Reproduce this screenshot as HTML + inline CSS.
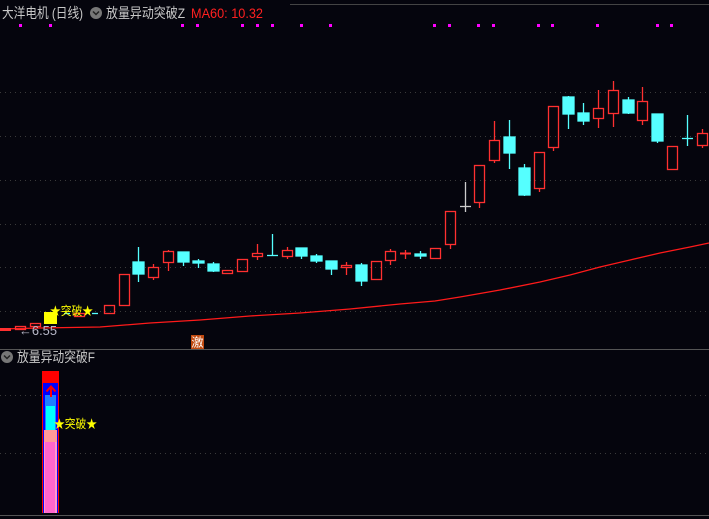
<!DOCTYPE html>
<html><head><meta charset="utf-8"><style>
html,body{margin:0;padding:0;background:#05050d;width:709px;height:519px;overflow:hidden}
svg{display:block}
text{font-family:"Liberation Sans","Noto Sans CJK SC",sans-serif}
</style></head><body>
<svg width="709" height="519" viewBox="0 0 709 519" xmlns="http://www.w3.org/2000/svg">
<rect width="709" height="519" fill="#05050d"/>
<line x1="290" y1="4.5" x2="709" y2="4.5" stroke="#444" stroke-width="1"/>
<g stroke="#3a3a3a" stroke-dasharray="1,4" stroke-width="1">
<line x1="0" y1="92.5" x2="709" y2="92.5"/><line x1="0" y1="136.5" x2="709" y2="136.5"/>
<line x1="0" y1="180.5" x2="709" y2="180.5"/><line x1="0" y1="224.5" x2="709" y2="224.5"/>
<line x1="0" y1="267.5" x2="709" y2="267.5"/><line x1="0" y1="311.5" x2="709" y2="311.5"/>
<line x1="0" y1="395.5" x2="709" y2="395.5"/><line x1="0" y1="453.5" x2="709" y2="453.5"/>
</g>
<line x1="0" y1="349.5" x2="709" y2="349.5" stroke="#555"/>
<line x1="0" y1="515.5" x2="709" y2="515.5" stroke="#555"/>
<text x="2" y="18" font-size="14" fill="#c8c8c8" textLength="81" lengthAdjust="spacingAndGlyphs">大洋电机 (日线)</text>
<circle cx="96" cy="13" r="6" fill="#777"/><path d="M93 11.5l3 3 3-3" stroke="#222" stroke-width="1.5" fill="none"/>
<text x="106" y="18" font-size="14" fill="#c8c8c8" textLength="79" lengthAdjust="spacingAndGlyphs">放量异动突破Z</text>
<text x="191" y="18" font-size="14" fill="#ff2020" textLength="72" lengthAdjust="spacingAndGlyphs">MA60: 10.32</text>
<g fill="#ff00ff">
<rect x="19" y="24" width="3" height="3"/><rect x="49" y="24" width="3" height="3"/><rect x="181" y="24" width="3" height="3"/><rect x="196" y="24" width="3" height="3"/><rect x="241" y="24" width="3" height="3"/><rect x="256" y="24" width="3" height="3"/><rect x="271" y="24" width="3" height="3"/><rect x="300" y="24" width="3" height="3"/><rect x="329" y="24" width="3" height="3"/><rect x="433" y="24" width="3" height="3"/><rect x="448" y="24" width="3" height="3"/><rect x="477" y="24" width="3" height="3"/><rect x="492" y="24" width="3" height="3"/><rect x="537" y="24" width="3" height="3"/><rect x="551" y="24" width="3" height="3"/><rect x="596" y="24" width="3" height="3"/><rect x="656" y="24" width="3" height="3"/><rect x="670" y="24" width="3" height="3"/>
</g>
<polyline fill="none" stroke="#ff1a1a" stroke-width="1.3" points="0,329 40,328 100,327 150,323 200,320 250,316 300,313 350,309 400,304 435,301 460,297 500,290 540,282 570,275 600,267 630,260 660,253 690,247 709,243"/>
<g stroke="#ff3030" stroke-width="1.3" fill="none">
<rect x="15.5" y="326.5" width="10" height="3"/><rect x="30.5" y="323.5" width="10" height="3"/>
<rect x="74.5" y="313.5" width="10" height="3"/>
<rect x="104.5" y="305.5" width="10" height="8"/>
<rect x="119.5" y="274.5" width="10" height="31"/>
<line x1="153.5" y1="264" x2="153.5" y2="280"/><rect x="148.5" y="267.5" width="10" height="10" fill="#05050d"/>
<line x1="168.5" y1="250" x2="168.5" y2="271"/><rect x="163.5" y="251.5" width="10" height="11" fill="#05050d"/>
<rect x="222.5" y="270.5" width="10" height="3"/>
<rect x="237.5" y="259.5" width="10" height="12"/>
<line x1="257.5" y1="244" x2="257.5" y2="260"/><rect x="252.5" y="253.5" width="10" height="3" fill="#05050d"/>
<line x1="287.5" y1="247" x2="287.5" y2="259"/><rect x="282.5" y="250.5" width="10" height="6" fill="#05050d"/>
<line x1="346.5" y1="262" x2="346.5" y2="275"/><rect x="341.5" y="265.5" width="10" height="2" fill="#05050d"/>
<rect x="371.5" y="261.5" width="10" height="18"/>
<line x1="390.5" y1="249" x2="390.5" y2="265"/><rect x="385.5" y="251.5" width="10" height="9" fill="#05050d"/>
<line x1="405.5" y1="250" x2="405.5" y2="259"/><line x1="400" y1="253.5" x2="411" y2="253.5" stroke-width="2"/>
<rect x="430.5" y="248.5" width="10" height="10"/>
<line x1="450.5" y1="244" x2="450.5" y2="249"/><rect x="445.5" y="211.5" width="10" height="33"/>
<line x1="479.5" y1="202" x2="479.5" y2="208"/><rect x="474.5" y="165.5" width="10" height="37"/>
<line x1="494.5" y1="121" x2="494.5" y2="163"/><rect x="489.5" y="140.5" width="10" height="20" fill="#05050d"/>
<line x1="539.5" y1="188" x2="539.5" y2="192"/><rect x="534.5" y="152.5" width="10" height="36"/>
<line x1="553.5" y1="147" x2="553.5" y2="151"/><rect x="548.5" y="106.5" width="10" height="41"/>
<line x1="598.5" y1="90" x2="598.5" y2="128"/><rect x="593.5" y="108.5" width="10" height="10" fill="#05050d"/>
<line x1="613.5" y1="81" x2="613.5" y2="127"/><rect x="608.5" y="90.5" width="10" height="23" fill="#05050d"/>
<line x1="642.5" y1="87" x2="642.5" y2="125"/><rect x="637.5" y="101.5" width="10" height="19" fill="#05050d"/>
<rect x="667.5" y="146.5" width="10" height="23"/>
<line x1="702.5" y1="129" x2="702.5" y2="148"/><rect x="697.5" y="133.5" width="10" height="12" fill="#05050d"/>
</g>
<rect x="0" y="328" width="11" height="3" fill="#ff3030"/>
<g stroke="#55ffff" stroke-width="1.3" fill="#55ffff">
<line x1="138.5" y1="247" x2="138.5" y2="282"/><rect x="133" y="262" width="11" height="12"/>
<line x1="183.5" y1="252" x2="183.5" y2="266"/><rect x="178" y="252" width="11" height="10"/>
<line x1="198.5" y1="259" x2="198.5" y2="268"/><rect x="193" y="261" width="11" height="2"/>
<line x1="213.5" y1="262" x2="213.5" y2="272"/><rect x="208" y="264" width="11" height="7"/>
<line x1="272.5" y1="234" x2="272.5" y2="255"/><line x1="267" y1="255.5" x2="278" y2="255.5"/>
<rect x="296" y="248" width="11" height="8"/><line x1="301.5" y1="256" x2="301.5" y2="259"/>
<line x1="316.5" y1="254" x2="316.5" y2="263"/><rect x="311" y="256" width="11" height="5"/>
<line x1="331.5" y1="261" x2="331.5" y2="275"/><rect x="326" y="261" width="11" height="8"/>
<line x1="361.5" y1="263" x2="361.5" y2="286"/><rect x="356" y="265" width="11" height="16"/>
<line x1="420.5" y1="251" x2="420.5" y2="259"/><rect x="415" y="254" width="11" height="2"/>
<line x1="509.5" y1="120" x2="509.5" y2="169"/><rect x="504" y="137" width="11" height="16"/>
<line x1="524.5" y1="164" x2="524.5" y2="196"/><rect x="519" y="168" width="11" height="27"/>
<line x1="568.5" y1="96" x2="568.5" y2="129"/><rect x="563" y="97" width="11" height="17"/>
<line x1="583.5" y1="103" x2="583.5" y2="125"/><rect x="578" y="113" width="11" height="8"/>
<line x1="628.5" y1="97" x2="628.5" y2="114"/><rect x="623" y="100" width="11" height="13"/>
<line x1="657.5" y1="114" x2="657.5" y2="143"/><rect x="652" y="114" width="11" height="27"/>
<line x1="687.5" y1="115" x2="687.5" y2="146"/><line x1="682" y1="138.5" x2="693" y2="138.5"/>
<line x1="64" y1="313.5" x2="70" y2="313.5"/><line x1="92" y1="313.5" x2="98" y2="313.5"/>
</g>
<g stroke="#cccccc" stroke-width="1.3"><line x1="465.5" y1="182" x2="465.5" y2="212"/><line x1="460" y1="206.5" x2="471" y2="206.5"/></g>
<rect x="44" y="312" width="13" height="12" fill="#ffff00"/>
<text x="50" y="315" font-size="12" fill="#ffff00" textLength="43" lengthAdjust="spacingAndGlyphs">★突破★</text>
<text x="19" y="335" font-size="13" fill="#b8b8c8" textLength="38" lengthAdjust="spacingAndGlyphs">←6.55</text>
<rect x="191" y="335" width="13" height="14" fill="#c04a10"/>
<text x="191.5" y="346.5" font-size="12" fill="#ffffff">激</text>
<circle cx="7" cy="357" r="6" fill="#777"/><path d="M4 355.5l3 3 3-3" stroke="#222" stroke-width="1.5" fill="none"/>
<text x="17" y="362" font-size="14" fill="#c8c8c8" textLength="78" lengthAdjust="spacingAndGlyphs">放量异动突破F</text>
<rect x="42" y="371" width="17" height="142" fill="#ff0000"/>
<rect x="43" y="383" width="15" height="130" fill="#0000ff"/>
<rect x="45" y="395" width="11" height="35" fill="#1e7fff"/>
<rect x="46" y="406" width="9" height="24" fill="#00ffff"/>
<rect x="44" y="430" width="13" height="12" fill="#ff9999"/>
<rect x="44" y="442" width="13" height="71" fill="#ff99cc"/>
<rect x="45" y="442" width="10" height="71" fill="#ff66cc"/>
<path d="M51 397V386M46.5 391.5L51 386.5 55.5 391.5" stroke="#ff0000" stroke-width="2" fill="none"/>
<text x="54" y="428" font-size="12" fill="#ffff00" textLength="43" lengthAdjust="spacingAndGlyphs">★突破★</text>
</svg>
</body></html>
